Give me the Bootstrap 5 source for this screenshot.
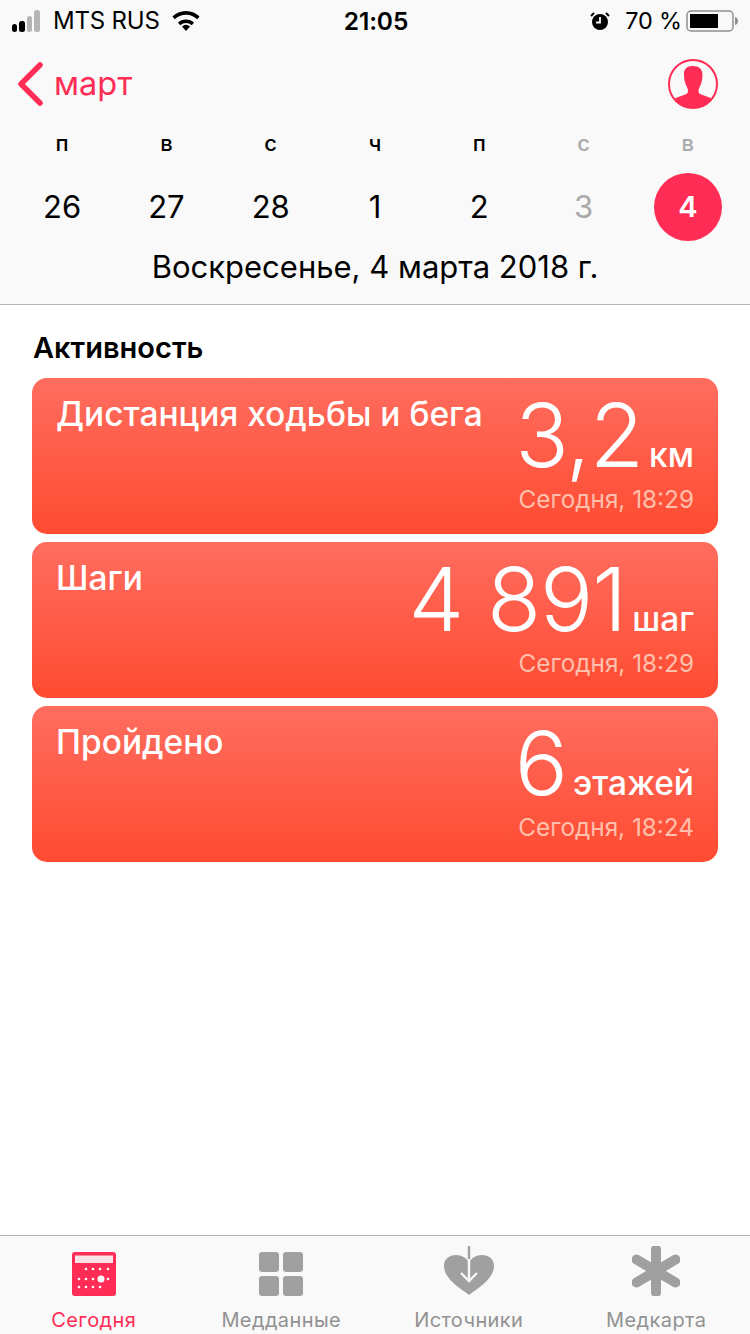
<!DOCTYPE html>
<html lang="ru">
<head>
  <meta charset="UTF-8">
  <meta name="viewport" content="width=device-width, initial-scale=1.0">
  <title>Сегодня</title>
  <link href="https://cdn.jsdelivr.net/npm/bootstrap@5.3.0/dist/css/bootstrap.min.css" rel="stylesheet">
  <style>
    body { font-family: Inter, "Noto Sans", sans-serif; background: #fff; color: #000; height: 1334px; overflow: hidden; }
    .phone { height: 1334px; width: 750px; }
    .top-area { background: #f9f9f9; border-bottom: 1px solid #b4b4b4; height: 305px; flex: none; }
    .status-row { height: 40px; padding: 1px 12px 0 12px; font-size: 24px; line-height: 40px; letter-spacing: -.1px; }
    .status-side { width: 300px; }
    .carrier { margin-left: 8px; letter-spacing: -.2px; }
    .wifi-mark { margin-left: 12px; }
    .clock { font-size: 24.5px; font-weight: 600; margin-left: 2px; }
    .battery-text { font-size: 23.4px; margin-left: 15px; }
    .nav-row { height: 78px; padding: 10px 32px 0 17px; }
    .month-link { color: #ff2d55; font-size: 32.5px; line-height: 40px; margin-left: 9px; }
    .week-row { padding: 0 10px; height: 34px; margin-top: 8px; }
    .week-row > div, .days-row > div { width: 14.2857%; text-align: center; }
    .week-row > div { font-size: 22px; font-weight: 500; line-height: 34px; }
    .off-day { color: #a9a9a9; }
    .days-row { padding: 0 10px; height: 76px; font-size: 31px; line-height: 68px; margin-top: 13px; }
    .today-mark { width: 68px; height: 68px; border-radius: 50%; background: #ff2d55; color: #fff; font-weight: 600; font-size: 29px; }
    .date-line { font-size: 31px; line-height: 40px; text-align: center; margin-top: -2px; }
    .section-title { font-size: 29px; font-weight: 600; line-height: 36px; margin: 25px 0 12px 33px; }
    .cards-wrap { padding: 0 32px; gap: 8px; }
    .stat-tile { height: 156px; border-radius: 15px; border: 0; color: #fff; background: linear-gradient(180deg, #ff6d5f 0%, #ff4b31 100%); padding: 0 24px; }
    .stat-name { font-size: 33.5px; font-weight: 500; line-height: 40px; margin-top: 16px; }
    .stat-value { line-height: 58px; font-size: 88.5px; font-weight: 280; margin-top: 28px; letter-spacing: -1px; }
    .stat-unit { font-size: 33.5px; font-weight: 500; margin-left: 6px; letter-spacing: 0; }
    .stat-time { font-size: 24.3px; line-height: 30px; color: #ffc0ad; margin-top: 0; }
    .tab-strip { height: 99px; background: #f9f9f9; border-top: 1px solid #b4b4b4; flex: none; }
    .tab-item { width: 25%; color: #929292; font-size: 20px; line-height: 26px; letter-spacing: .4px; }
    .tab-item.active-tab { color: #ff2d55; }
    .tab-icon { height: 60px; }
    .tab-label { margin-top: 11px; }
  </style>
</head>
<body>
<div class="phone d-flex flex-column">
  <div class="top-area">
    <div class="status-row d-flex justify-content-between align-items-center">
      <div class="status-side d-flex align-items-center">
        <svg width="33" height="22" viewBox="0 0 33 22"><rect x="0" y="14" width="5" height="8" rx="2.5"/><rect x="7" y="11" width="6" height="11" rx="2.5"/><rect x="15" y="6" width="5" height="16" rx="2.5" fill="#b5b5b5"/><rect x="23" y="0" width="6" height="22" rx="2.5" fill="#b5b5b5" transform="translate(-1 0)"/></svg>
        <span class="carrier">MTS RUS</span>
        <svg class="wifi-mark" width="28" height="22" viewBox="0 0 28 22"><path d="M14 21l-4-4.6a6 6 0 0 1 8 0z"/><path d="M14 9.5c-3.200 0-6 1.200-8 3.200l2.300 2.600a8 8 0 0 1 11.400 0l2.300-2.600c-2-2-4.800-3.200-8-3.200z"/><path d="M14 1C8.600 1 3.800 3.100 0.400 6.600l2.400 2.700A15.800 15.800 0 0 1 14 4.700c4.400 0 8.300 1.700 11.200 4.600l2.400-2.700C24.200 3.100 19.400 1 14 1z"/></svg>
      </div>
      <div class="clock">21:05</div>
      <div class="status-side d-flex align-items-center justify-content-end">
        <svg width="20" height="20" viewBox="0 0 20 20"><circle cx="10" cy="11" r="8"/><path d="M10 6v5.500H6" stroke="#f9f9f9" stroke-width="1.800" fill="none"/><path d="M1 5l3-3M19 5l-3-3" stroke="#000" stroke-width="2"/></svg>
        <span class="battery-text">70 %</span>
        <svg class="ms-1" width="52" height="24" viewBox="0 0 52 24"><rect x="1" y="2" width="46" height="20" rx="4" fill="none" stroke="#8e8e8e" stroke-width="1.500"/><rect x="4" y="5" width="28" height="14" fill="#000"/><path d="M49 8c2 .5 3 2 3 4s-1 3.500-3 4z" fill="#8e8e8e"/></svg>
      </div>
    </div>
    <div class="nav-row d-flex justify-content-between align-items-center">
      <div class="d-flex align-items-center">
        <svg width="28" height="44" viewBox="0 0 28 44"><path d="M23 3L4 22l19 19" fill="none" stroke="#ff2d55" stroke-width="5.500" stroke-linecap="round" stroke-linejoin="round"/></svg>
        <span class="month-link">март</span>
      </div>
      <svg width="50" height="50" viewBox="0 0 50 50"><defs><clipPath id="faceClip"><circle cx="25" cy="25" r="24"/></clipPath></defs><circle cx="25" cy="25" r="24" fill="none" stroke="#ff2d55" stroke-width="2"/><path clip-path="url(#faceClip)" d="M25 7c6 0 9.500 3 9.500 9 0 3-.5 6-1.500 9-1 2.500-2.500 4.500-2.500 7 0 2 1 3 4 4l7 2.500c3 1 4 3 5 5v8H4v-8c1-2 2-4 5-5l7-2.500c3-1 4-2 4-4 0-2.500-1.500-4.500-2.500-7-1-3-1.500-6-1.500-9C15.500 10 19 7 25 7z" fill="#ff2d55"/></svg>
    </div>
    <div class="week-row d-flex">
      <div>п</div><div>в</div><div>с</div><div>ч</div><div>п</div><div class="off-day">с</div><div class="off-day">в</div>
    </div>
    <div class="days-row d-flex">
      <div>26</div><div>27</div><div>28</div><div>1</div><div>2</div><div class="off-day">3</div>
      <div class="d-flex justify-content-center"><div class="today-mark">4</div></div>
    </div>
    <div class="date-line">Воскресенье, 4 марта 2018 г.</div>
  </div>

  <div class="flex-grow-1">
    <div class="section-title">Активность</div>
    <div class="cards-wrap d-flex flex-column">
      <div class="card stat-tile flex-row justify-content-between">
        <div class="stat-name">Дистанция ходьбы и бега</div>
        <div class="text-end">
          <div class="stat-value">3,2<span class="stat-unit">км</span></div>
          <div class="stat-time">Сегодня, 18:29</div>
        </div>
      </div>
      <div class="card stat-tile flex-row justify-content-between">
        <div class="stat-name">Шаги</div>
        <div class="text-end">
          <div class="stat-value">4 891<span class="stat-unit">шаг</span></div>
          <div class="stat-time">Сегодня, 18:29</div>
        </div>
      </div>
      <div class="card stat-tile flex-row justify-content-between">
        <div class="stat-name">Пройдено</div>
        <div class="text-end">
          <div class="stat-value">6<span class="stat-unit">этажей</span></div>
          <div class="stat-time">Сегодня, 18:24</div>
        </div>
      </div>
    </div>
  </div>

  <div class="tab-strip d-flex">
    <div class="tab-item active-tab text-center">
      <div class="tab-icon d-flex justify-content-center align-items-end">
        <svg width="44" height="44" viewBox="0 0 44 44"><rect width="44" height="44" rx="3" fill="#ff2d55"/><rect x="3" y="3.500" width="38" height="7.500" fill="#fbe3e8"/><g fill="#fff"><circle cx="14" cy="17" r="1.300"/><circle cx="21" cy="17" r="1.300"/><circle cx="28" cy="17" r="1.300"/><circle cx="36" cy="17" r="1.300"/><circle cx="7" cy="27" r="1.300"/><circle cx="14" cy="27" r="1.300"/><circle cx="21" cy="27" r="1.300"/><circle cx="29" cy="27" r="3.500"/><circle cx="36" cy="27" r="1.300"/><circle cx="7" cy="35" r="1.300"/><circle cx="14" cy="35" r="1.300"/><circle cx="21" cy="35" r="1.300"/><circle cx="28" cy="35" r="1.300"/></g></svg>
      </div>
      <div class="tab-label">Сегодня</div>
    </div>
    <div class="tab-item text-center">
      <div class="tab-icon d-flex justify-content-center align-items-end">
        <svg width="44" height="44" viewBox="0 0 44 44" fill="#a0a0a0"><rect width="20" height="20" rx="3"/><rect x="24" width="20" height="20" rx="3"/><rect y="24" width="20" height="20" rx="3"/><rect x="24" y="24" width="20" height="20" rx="3"/></svg>
      </div>
      <div class="tab-label">Медданные</div>
    </div>
    <div class="tab-item text-center">
      <div class="tab-icon d-flex justify-content-center align-items-end">
        <svg width="52" height="50" viewBox="0 0 52 50"><path d="M26 49C17 42 1 33 1 20 1 13 6 9 13 9c6 0 10 3 13 7 3-4 7-7 13-7 7 0 12 4 12 11 0 13-16 22-25 29z" fill="#a0a0a0"/><path d="M26 0v33M18 27l8 8 8-8" fill="none" stroke="#f9f9f9" stroke-width="2.400"/><path d="M26 0v13" stroke="#a0a0a0" stroke-width="2.400"/></svg>
      </div>
      <div class="tab-label">Источники</div>
    </div>
    <div class="tab-item text-center">
      <div class="tab-icon d-flex justify-content-center align-items-end">
        <svg width="48" height="50" viewBox="0 0 48 50"><g stroke="#a0a0a0" stroke-width="10" stroke-linecap="round"><path d="M24 3.500v43"/><path d="M4.500 13.500l39 23"/><path d="M43.500 13.500l-39 23"/></g></svg>
      </div>
      <div class="tab-label">Медкарта</div>
    </div>
  </div>
</div>
<script src="https://cdn.jsdelivr.net/npm/bootstrap@5.3.0/dist/js/bootstrap.bundle.min.js"></script>
</body>
</html>
